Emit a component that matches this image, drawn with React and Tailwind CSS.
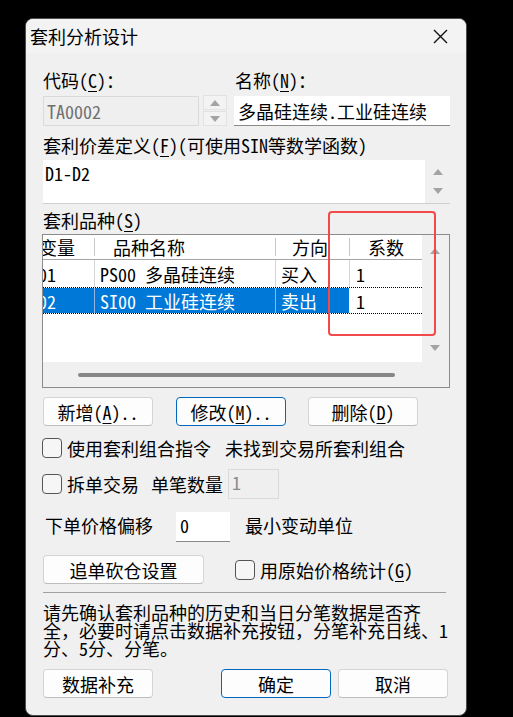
import React from 'react';

const U = ({ children }) => <span className="underline underline-offset-[3px]">{children}</span>;

const Tri = ({ down }) => (
  <svg width="10" height="6" viewBox="0 0 10 6" className="text-[#a3a3a3]">
    <polygon points={down ? '0,0 10,0 5,6' : '0,6 10,6 5,0'} fill="currentColor" />
  </svg>
);

const Check = ({ className = '' }) => (
  <span className={`block w-[20px] h-[20px] shrink-0 rounded-[4px] border border-[#555] bg-[#f6f6f6] ${className}`} />
);

const Btn = ({ children, primary, className = '' }) => (
  <button
    className={`h-[29px] rounded-[4px] border bg-[#fdfdfd] text-[18px] leading-none flex items-center justify-center ${
      primary ? 'border-[#0067c0]' : 'border-[#d4d4d4] border-b-[#bdbdbd]'
    } ${className}`}
  >
    {children}
  </button>
);

const rows = [
  { v: '01', name: 'PS00 多晶硅连续', dir: '买入', k: '1' },
  { v: '02', name: 'SI00 工业硅连续', dir: '卖出', k: '1', selected: true },
];

export default function App() {
  return (
    <div className="min-h-[717px] bg-black pt-[18px] pl-[25px] text-black font-['Noto_Sans_Mono_CJK_SC','Noto_Sans_CJK_SC',sans-serif]">
      <div className="w-[442px] h-[698px] rounded-[8px] border border-[#4d4d4d] bg-[#f0f0f0] overflow-hidden flex flex-col">
        {/* title bar */}
        <div className="h-[34px] bg-[#f3f3f3] flex items-center justify-between pl-[4px] pr-[18px] text-[18px] leading-none">
          <span>套利分析设计</span>
          <svg width="15" height="15" viewBox="0 0 15 15">
            <path d="M1 1L14 14M14 1L1 14" stroke="#111" strokeWidth="1.4" />
          </svg>
        </div>

        <div className="px-[16px] flex flex-col text-[18px] leading-[24px]">
          {/* code / name labels */}
          <div className="mt-[15px] h-[24px] flex">
            <span className="w-[193px] pl-[1px]">代码(<U>C</U>)：</span>
            <span>名称(<U>N</U>)：</span>
          </div>
          <div className="mt-[4px] h-[30px] flex">
            <div className="ml-[1px] w-[156px] h-[30px] border border-[#dadada] bg-[#efefef] text-[#707070] pl-[3px] flex items-center">
              TA0002
            </div>
            <div className="ml-[4px] w-[24px] flex flex-col gap-px -mt-px">
              <div className="h-[15px] border border-[#e2e2e2] bg-[#f3f3f3] flex items-center justify-center">
                <Tri />
              </div>
              <div className="h-[15px] border border-[#e2e2e2] bg-[#f3f3f3] flex items-center justify-center">
                <Tri down />
              </div>
            </div>
            <div className="ml-[7px] flex-1 h-[30px] bg-white border-b border-[#8a8a8a] pl-[4px] flex items-center">
              多晶硅连续.工业硅连续
            </div>
          </div>

          {/* formula */}
          <div className="mt-[7px] h-[24px] pl-[1px]">
            套利价差定义(<U>F</U>)(可使用SIN等数学函数)
          </div>
          <div className="mt-[3px] ml-[1px] h-[44px] flex bg-white border-b border-[#cfcfcf]">
            <div className="flex-1 pl-[2px] pt-[1px]">D1-D2</div>
            <div className="w-[25px] bg-[#f0f0f0] flex flex-col items-center justify-between py-[9px]">
              <Tri />
              <Tri down />
            </div>
          </div>

          {/* list */}
          <div className="mt-[4px] h-[24px] pl-[1px]">
            套利品种(<U>S</U>)
          </div>
          <div className="relative mt-[2px] h-[154px] border border-[#8c8c8c] grid grid-cols-[379px_25px] grid-rows-[127px_25px]">
            <div className="bg-white overflow-hidden">
              <div className="h-[25px] flex border-b border-[#a5a5a5]">
                <div className="w-[52px] overflow-hidden flex items-center">
                  <span className="-ml-[4px] whitespace-nowrap">变量</span>
                  <span className="ml-auto w-px h-[18px] bg-[#c8c8c8]" />
                </div>
                <div className="w-[181px] flex items-center pl-[18px]">
                  <span>品种名称</span>
                  <span className="ml-auto w-px h-[18px] bg-[#c8c8c8]" />
                </div>
                <div className="w-[74px] flex items-center pl-[16px]">
                  <span>方向</span>
                  <span className="ml-auto w-px h-[18px] bg-[#c8c8c8]" />
                </div>
                <div className="flex-1 flex items-center pl-[18px]">系数</div>
              </div>
              {rows.map((r) => (
                <div
                  key={r.v}
                  className={`h-[27px] flex ${r.selected ? 'border-y border-dotted border-black' : ''}`}
                >
                  <div
                    className={`w-[52px] overflow-hidden flex items-center border-r ${
                      r.selected ? 'bg-[#0078d7] text-white border-[#8fb9e4]' : 'border-[#d5d5d5]'
                    }`}
                  >
                    <span className="-ml-[5px]">{r.v}</span>
                  </div>
                  <div
                    className={`w-[181px] flex items-center pl-[5px] border-r whitespace-pre ${
                      r.selected ? 'bg-[#0078d7] text-white border-[#8fb9e4]' : 'border-[#d5d5d5]'
                    }`}
                  >
                    {r.name}
                  </div>
                  <div
                    className={`w-[74px] flex items-center pl-[5px] border-r ${
                      r.selected ? 'bg-[#0078d7] text-white border-white' : 'border-[#d5d5d5]'
                    }`}
                  >
                    {r.dir}
                  </div>
                  <div className="flex-1 flex items-center pl-[6px]">{r.k}</div>
                </div>
              ))}
            </div>
            <div className="bg-[#f0f0f0] flex flex-col items-center justify-between pt-[13px] pb-[11px]">
              <Tri />
              <Tri down />
            </div>
            <div className="bg-[#f0f0f0] pl-[35px] pt-[11px]">
              <div className="w-[317px] h-[4px] rounded-full bg-[#868686]" />
            </div>
            <div className="bg-[#f0f0f0]" />
            <div className="absolute left-[285px] top-[-24px] w-[108px] h-[125px] rounded-[4px] border-2 border-[#f04a4a]" />
          </div>

          {/* buttons */}
          <div className="mt-[9px] h-[29px] flex pl-[1px]">
            <Btn className="w-[110px]">新增(<U>A</U>)..</Btn>
            <Btn primary className="ml-[23px] w-[110px]">修改(<U>M</U>)..</Btn>
            <Btn className="ml-[22px] w-[110px]">删除(<U>D</U>)</Btn>
          </div>

          {/* options */}
          <div className="mt-[10px] h-[24px] flex items-center">
            <Check />
            <span className="ml-[5px]">使用套利组合指令</span>
            <span className="ml-[14px]">未找到交易所套利组合</span>
          </div>
          <div className="mt-[9px] h-[30px] flex items-center">
            <Check />
            <span className="ml-[5px]">拆单交易</span>
            <span className="ml-[12px]">单笔数量</span>
            <div className="ml-[5px] w-[51px] h-[30px] border border-[#dadada] bg-[#efefef] text-[#8a8a8a] pl-[3px] leading-[24px]">
              1
            </div>
          </div>
          <div className="mt-[13px] h-[30px] flex items-center">
            <span className="pl-[3px] w-[134px] -mt-[5px]">下单价格偏移</span>
            <div className="w-[54px] h-[30px] bg-white border-b border-[#8a8a8a] pl-[4px] leading-[26px]">0</div>
            <span className="ml-[15px] -mt-[5px]">最小变动单位</span>
          </div>
          <div className="mt-[13px] h-[29px] flex items-center pl-[1px]">
            <Btn className="w-[161px]">追单砍仓设置</Btn>
            <Check className="ml-[31px]" />
            <span className="ml-[5px]">用原始价格统计(<U>G</U>)</span>
          </div>

          <div className="mt-[8px] ml-[1px] w-[403px] h-px bg-[#a0a0a0]" />

          <p className="mt-[10px] pl-[1px] leading-[18px] whitespace-nowrap">
            请先确认套利品种的历史和当日分笔数据是否齐
            <br />
            全，必要时请点击数据补充按钮，分笔补充日线、1
            <br />
            分、5分、分笔。
          </p>

          <div className="mt-[12px] h-[29px] flex pl-[1px]">
            <Btn className="w-[110px]">数据补充</Btn>
            <Btn primary className="ml-[68px] w-[110px]">确定</Btn>
            <Btn className="ml-[7px] w-[110px]">取消</Btn>
          </div>
        </div>
      </div>
    </div>
  );
}
